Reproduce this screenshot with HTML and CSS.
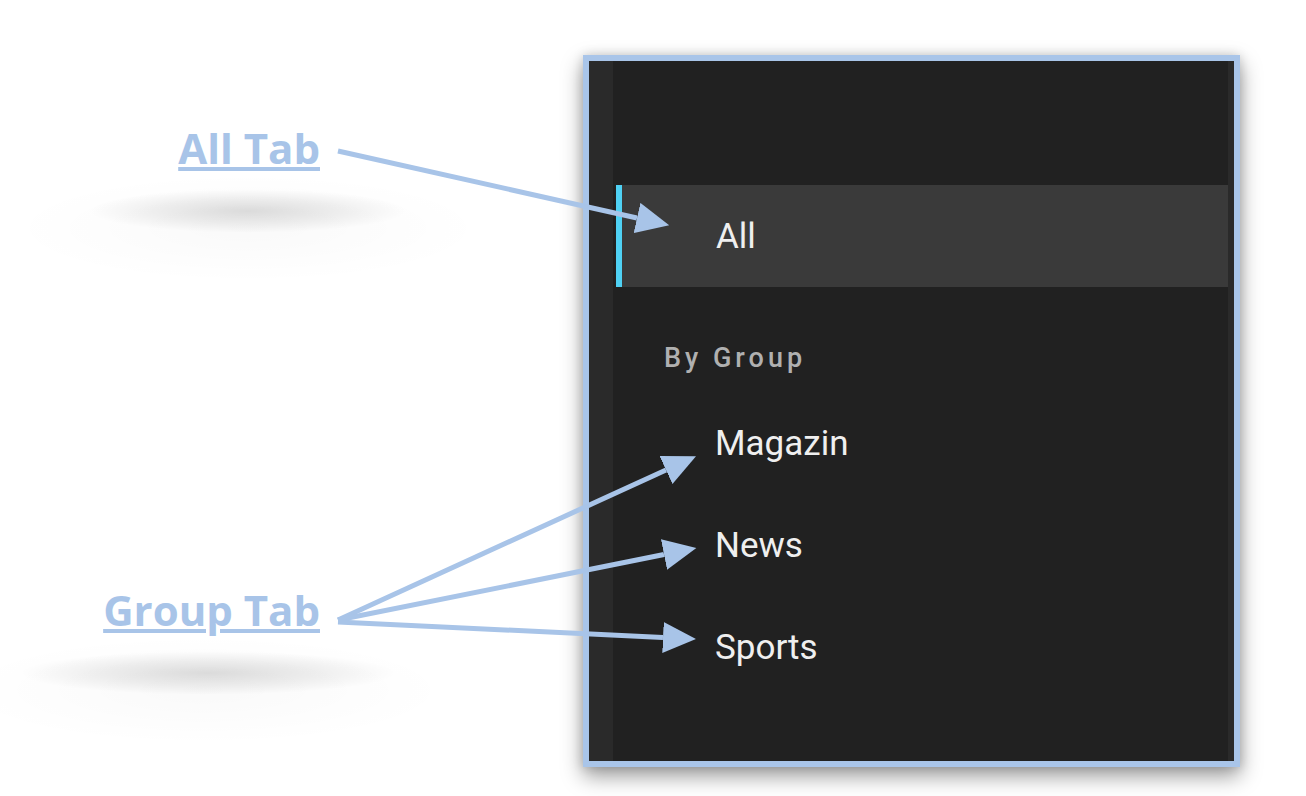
FILE: index.html
```html
<!DOCTYPE html>
<html lang="en">
<head>
<meta charset="utf-8">
<title>Tabs annotation</title>
<link rel="stylesheet" href="styles.css">
</head>
<body>
<div class="page">
  <div class="notes">
    <div class="note note-all"><span class="note-text">All Tab</span></div>
    <div class="note note-group"><span class="note-text">Group Tab</span></div>
  </div>
  <div class="panel">
    <div class="strip strip-left"></div>
    <div class="main">
      <div class="header"></div>
      <div class="tab tab-selected"><span class="tab-label">All</span></div>
      <div class="subheader">By Group</div>
      <div class="tab"><span class="tab-label">Magazin</span></div>
      <div class="tab"><span class="tab-label">News</span></div>
      <div class="tab"><span class="tab-label">Sports</span></div>
    </div>
    <div class="strip strip-right"></div>
  </div>
  <svg class="arrows" width="1306" height="796" viewBox="0 0 1306 796" xmlns="http://www.w3.org/2000/svg">
    <defs>
      <marker id="head" markerUnits="userSpaceOnUse" markerWidth="34" markerHeight="32" refX="0" refY="15.5" orient="auto">
        <path d="M0,0 L33,15.5 L0,31 z" fill="#a8c4e8"/>
      </marker>
    </defs>
    <g stroke="#a8c4e8" stroke-width="5" fill="none" stroke-linecap="butt">
      <line x1="338" y1="151" x2="637" y2="218" marker-end="url(#head)"/>
      <line x1="338" y1="620" x2="666" y2="470" marker-end="url(#head)"/>
      <line x1="338" y1="620" x2="664" y2="554.5" marker-end="url(#head)"/>
      <line x1="338" y1="622" x2="663" y2="637.5" marker-end="url(#head)"/>
    </g>
  </svg>
</div>
</body>
</html>
```

FILE: styles.css
```css
html, body {
  margin: 0;
  padding: 0;
  background: #ffffff;
}

.page {
  position: relative;
  width: 1306px;
  height: 796px;
  overflow: hidden;
  display: flex;
  align-items: flex-start;
  padding-top: 55px;
  box-sizing: border-box;
}

/* ---------- annotation labels ---------- */
.notes {
  width: 583px;
  flex: 0 0 583px;
  display: flex;
  flex-direction: column;
  align-items: flex-end;
  padding-right: 263px;
  box-sizing: border-box;
}

.note {
  position: relative;
  font-family: "Open Sans", "DejaVu Sans", sans-serif;
  font-weight: 700;
  font-size: 42px;
  line-height: 50px;
  color: #a8c4e8;
}

.note-text {
  text-decoration: underline;
  text-decoration-thickness: 4px;
  text-underline-offset: 3px;
  position: relative;
  z-index: 1;
}

.note-all {
  margin-top: 68px;
}

.note-group {
  margin-top: 412px;
}

.note::after {
  content: "";
  position: absolute;
  top: 66px;
  height: 44px;
  background: radial-gradient(ellipse at center, rgba(0,0,0,0.13) 0%, rgba(0,0,0,0.06) 40%, rgba(0,0,0,0) 70%);
  pointer-events: none;
}

.note::before {
  content: "";
  position: absolute;
  top: 50px;
  height: 110px;
  background: radial-gradient(ellipse at center, rgba(0,0,0,0.025) 0%, rgba(0,0,0,0) 70%);
  pointer-events: none;
}

.note-all::after {
  left: -90px;
  width: 320px;
}
.note-all::before {
  left: -170px;
  width: 480px;
}

.note-group::after {
  left: -85px;
  width: 380px;
}
.note-group::before {
  left: -150px;
  width: 500px;
}

/* ---------- panel ---------- */
.panel {
  width: 657px;
  height: 712px;
  flex: 0 0 657px;
  box-sizing: border-box;
  border: 6px solid #a9c5e9;
  background: #212121;
  display: flex;
  box-shadow: 0 9px 20px rgba(0,0,0,0.4), 0 0 10px rgba(0,0,0,0.15);
}

.strip {
  background: #2a2a2a;
  flex: 0 0 auto;
}

.strip-left {
  width: 24px;
}

.strip-right {
  width: 6px;
}

.main {
  flex: 1 1 auto;
  display: flex;
  flex-direction: column;
  font-family: Roboto, "Noto Sans", sans-serif;
}

.header {
  height: 124px;
  flex: 0 0 auto;
}

.tab {
  height: 102px;
  flex: 0 0 auto;
  margin-left: 3px;
  display: flex;
  align-items: center;
  padding-left: 99px;
  box-sizing: border-box;
  font-size: 35px;
  color: #efefef;
}

.tab-selected {
  background: #3a3a3a;
  border-left: 6px solid #4fd1f4;
  padding-left: 94px;
}

.subheader {
  height: 105px;
  flex: 0 0 auto;
  box-sizing: border-box;
  padding-top: 55px;
  padding-left: 51px;
  font-size: 27px;
  font-weight: 500;
  letter-spacing: 4px;
  color: #b0b0b0;
  line-height: normal;
}

/* ---------- arrows overlay ---------- */
.arrows {
  position: absolute;
  left: 0;
  top: 0;
  pointer-events: none;
}
```
